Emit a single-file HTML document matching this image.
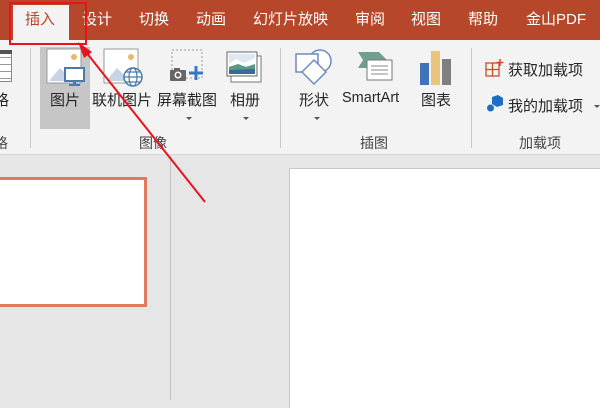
<!DOCTYPE html>
<html><head><meta charset="utf-8"><style>
*{margin:0;padding:0;box-sizing:border-box}
body{width:600px;height:400px;overflow:hidden;position:relative;background:#e6e6e6;font-family:"Liberation Sans","Noto Sans CJK SC",sans-serif;}
.a{position:absolute}
.tabs{left:0;top:0;width:600px;height:40px;background:#b7472a}
.tab{position:absolute;top:8px;color:#fff;font-size:15px;white-space:nowrap}
.rib{left:0;top:40px;width:600px;height:115px;background:#f3f3f3;border-bottom:1px solid #d4d4d4}
.lbl{position:absolute;font-size:15px;color:#262626;white-space:nowrap}
.gl{position:absolute;top:93px;font-size:14px;color:#444;white-space:nowrap}
.sep{position:absolute;top:8px;width:1px;height:100px;background:#c8c8c8}
.dd{position:absolute;width:0;height:0;border-left:3px solid transparent;border-right:3px solid transparent;border-top:3px solid #555}
</style></head><body>
<div class="a tabs">
<div class="a" style="left:13px;top:5px;width:56px;height:35px;background:#f3f3f3"></div>
<div class="tab" style="left:25px;color:#b7472a">插入</div>
<div class="tab" style="left:82px">设计</div>
<div class="tab" style="left:139px">切换</div>
<div class="tab" style="left:196px">动画</div>
<div class="tab" style="left:253px">幻灯片放映</div>
<div class="tab" style="left:355px">审阅</div>
<div class="tab" style="left:411px">视图</div>
<div class="tab" style="left:468px">帮助</div>
<div class="tab" style="left:526px">金山PDF</div>
</div>
<div class="a rib">
<div class="a" style="left:0;top:10px;width:12px;height:32px;border:1px solid #888;border-left:none;background:repeating-linear-gradient(#fff 0 6px,#999 6px 7px)"></div>
<div class="a" style="left:0;top:10px;width:12px;height:4px;background:#555"></div>
<div class="lbl" style="left:-6px;top:49px">格</div>
<div class="gl" style="left:-6px">格</div>
<div class="sep" style="left:30px"></div>
<div class="a" style="left:40px;top:7px;width:50px;height:82px;background:#c6c6c6"></div>
<svg class="a" style="left:46px;top:8px" width="40" height="40"><rect x="1" y="1" width="34" height="34" fill="#fff" stroke="#999"/><path d="M3 33 L14 20 L22 28 L30 22 L34 33Z" fill="#c6d4e6"/><circle cx="28" cy="9" r="3" fill="#e8b96a"/><rect x="19" y="20" width="19" height="13" fill="#fff" stroke="#4a7aac" stroke-width="2"/><rect x="27" y="33" width="3" height="3" fill="#4a7aac"/><rect x="23" y="36" width="11" height="2" fill="#4a7aac"/></svg>
<div class="lbl" style="left:50px;top:49px">图片</div>
<svg class="a" style="left:103px;top:8px" width="42" height="42"><rect x="1" y="1" width="34" height="34" fill="#fff" stroke="#999"/><path d="M3 33 L14 20 L22 28 L30 22 L34 33Z" fill="#c6d4e6"/><circle cx="28" cy="9" r="3" fill="#e8b96a"/><circle cx="30" cy="29" r="9" fill="#fff" stroke="#4a7aac" stroke-width="1.5"/><ellipse cx="30" cy="29" rx="4" ry="9" fill="none" stroke="#4a7aac" stroke-width="1.2"/><path d="M21 29H39M23 24H37M23 34H37" stroke="#4a7aac" stroke-width="1.2"/></svg>
<div class="lbl" style="left:92px;top:49px">联机图片</div>
<svg class="a" style="left:168px;top:8px" width="40" height="40"><rect x="4" y="2" width="30" height="28" fill="none" stroke="#999" stroke-dasharray="2 2"/><rect x="2" y="22" width="16" height="11" rx="1" fill="#666"/><rect x="6" y="20" width="6" height="3" fill="#666"/><circle cx="10" cy="27" r="3.5" fill="#fff"/><circle cx="10" cy="27" r="2" fill="#666"/><path d="M28 18V32M21 25H35" stroke="#3a78c4" stroke-width="3"/></svg>
<div class="lbl" style="left:157px;top:49px">屏幕截图</div>
<div class="dd" style="left:186px;top:77px"></div>
<svg class="a" style="left:226px;top:10px" width="40" height="40"><rect x="5" y="6" width="30" height="26" fill="#fff" stroke="#777"/><rect x="1" y="2" width="30" height="24" fill="#fff" stroke="#666"/><rect x="3" y="4" width="26" height="20" fill="#dfe7ef"/><path d="M3 14 L10 9 L18 13 L29 8 V16 H3Z" fill="#fff"/><path d="M3 17 L12 14 L20 17 L29 14 V24 H3Z" fill="#5a9a84"/><path d="M3 20 L29 19 V24 H3Z" fill="#3a6a9a"/></svg>
<div class="lbl" style="left:230px;top:49px">相册</div>
<div class="dd" style="left:243px;top:77px"></div>
<div class="gl" style="left:139px">图像</div>
<div class="sep" style="left:280px"></div>
<svg class="a" style="left:294px;top:6px" width="40" height="42"><circle cx="26" cy="15" r="11" fill="#fff" stroke="#6b8cbf" stroke-width="1.5"/><rect x="2" y="8" width="22" height="18" fill="#fff" stroke="#6b8cbf" stroke-width="1.5"/><path d="M20 20 L32 32 L20 44 L8 32Z" transform="translate(0,-6)" fill="#fff" stroke="#6b8cbf" stroke-width="1.5"/></svg>
<div class="lbl" style="left:299px;top:49px">形状</div>
<div class="dd" style="left:314px;top:77px"></div>
<svg class="a" style="left:355px;top:10px" width="40" height="36"><path d="M3 2H24L32 10L24 18H3L8 10Z" fill="#6fa08d"/><rect x="12" y="10" width="25" height="20" fill="#fff" stroke="#777"/><path d="M16 16H33M16 20H33M16 24H33" stroke="#888"/></svg>
<div class="lbl" style="left:342px;top:50px;font-size:14.5px">SmartArt</div>
<svg class="a" style="left:418px;top:9px" width="36" height="36"><rect x="2" y="14" width="9" height="22" fill="#3f73b5"/><rect x="13" y="2" width="9" height="34" fill="#e8c47c"/><rect x="24" y="10" width="9" height="26" fill="#7f7f7f"/></svg>
<div class="lbl" style="left:421px;top:49px">图表</div>
<div class="gl" style="left:360px">插图</div>
<div class="sep" style="left:471px"></div>
<svg class="a" style="left:485px;top:18px" width="20" height="20"><rect x="1" y="5" width="13" height="13" fill="none" stroke="#d04a2a" stroke-width="1.3"/><path d="M1 11.5H14M7.5 5V18" stroke="#d04a2a" stroke-width="1.3"/><path d="M15 1V8M11.5 4.5H18.5" stroke="#d04a2a" stroke-width="1.5"/></svg>
<div class="lbl" style="left:508px;top:19px">获取加载项</div>
<svg class="a" style="left:486px;top:55px" width="18" height="18"><path d="M6 2L12 0L17 3L17 10L11 12L6 9Z" fill="#1e6fc4"/><circle cx="4.5" cy="13" r="3.5" fill="#1e6fc4"/></svg>
<div class="lbl" style="left:508px;top:55px">我的加载项</div>
<div class="dd" style="left:594px;top:65px"></div>
<div class="gl" style="left:519px">加载项</div>
</div>
<div class="a" style="left:170px;top:156px;width:1px;height:244px;background:#c0c0c0"></div>
<div class="a" style="left:-3px;top:177px;width:150px;height:130px;background:#fff;border:3px solid #e07a5f"></div>
<div class="a" style="left:289px;top:168px;width:320px;height:240px;background:#fff;border-left:1px solid #c8c8c8;border-top:1px solid #c8c8c8"></div>
<div class="a" style="left:9px;top:2px;width:78px;height:43px;border:2px solid #e8141c"></div>
<svg class="a" style="left:0;top:0" width="600" height="400"><path d="M205 202L82 47" stroke="#e8141c" stroke-width="2"/><path d="M78 42L92 52L84 58Z" fill="#e8141c"/></svg>
</body></html>
